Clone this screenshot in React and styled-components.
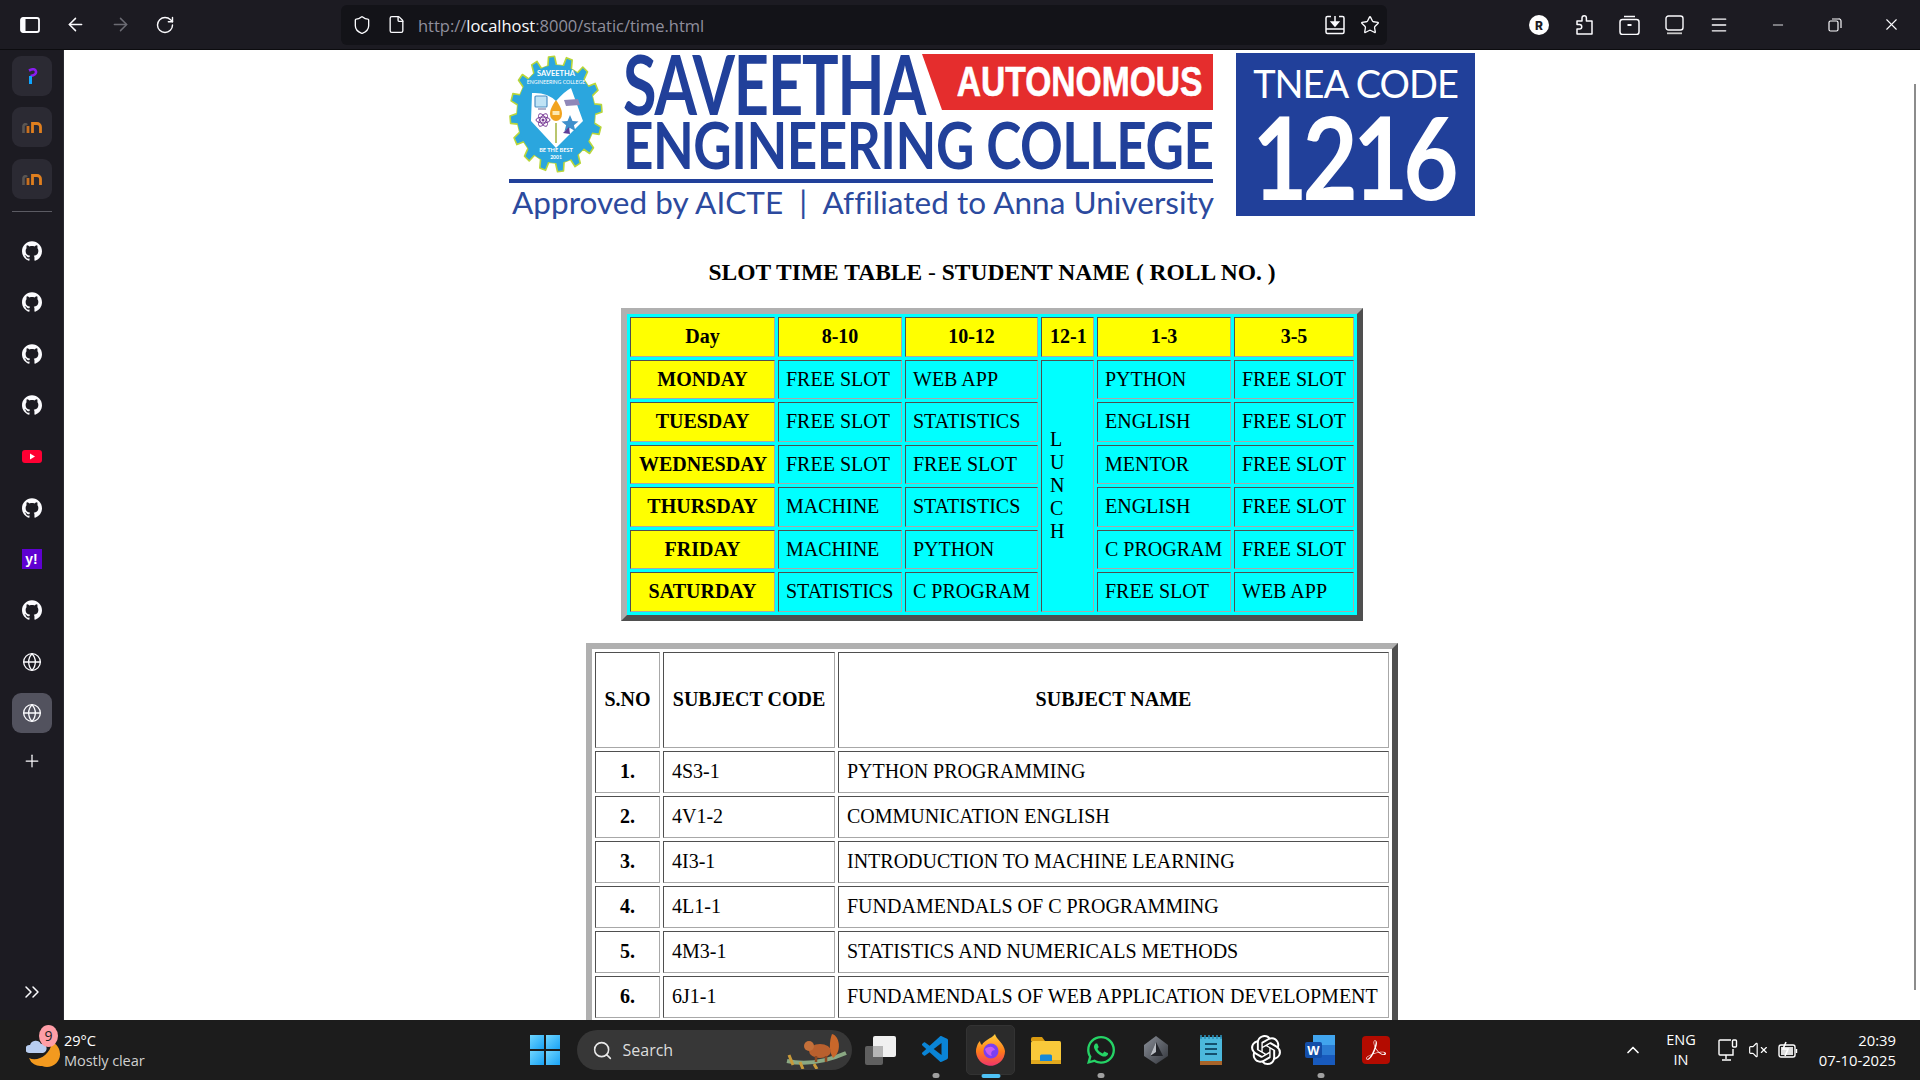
import React from "react";
import styled, { createGlobalStyle } from "styled-components";
import { ArrowLeft, ArrowRight, RotateCw, Shield, File, Star, Menu, Minus, X, Globe, Plus, ChevronsRight, ChevronUp, Search as SearchIcon, VolumeX } from "lucide-react";
import { SiGithub, SiOpenai, SiAdobeacrobatreader } from "react-icons/si";
import { FaWhatsapp } from "react-icons/fa";
import { VscVscode } from "react-icons/vsc";

const Global = createGlobalStyle`
  html, body { margin: 0; padding: 0; height: 100%; overflow: hidden; background: #fff; }
  #root { height: 100%; }
  * { box-sizing: border-box; }
`;

const Screen = styled.div`display:flex;flex-direction:column;height:1080px;width:1920px;overflow:hidden;`;
const Middle = styled.div`display:flex;flex:1;min-height:0;`;

const TopBar = styled.header`display:flex;align-items:center;height:50px;flex:none;background:#1c1b22;border-bottom:1px solid #0c0c0f;padding-left:7.5px;color:#fbfbfe;`;
const ToolSlot = styled.div`width:${p => p.$w || 45}px;height:49px;display:flex;align-items:center;justify-content:center;flex:none;color:${p => p.$dim ? "#6b6b73" : "#fbfbfe"};`;
const UrlBar = styled.div`display:flex;align-items:center;width:1046px;height:40px;margin-left:153.5px;background:#131318;border-radius:6px;padding-left:11px;flex:none;`;
const UrlIcon = styled.span`display:flex;width:${p => p.$w}px;justify-content:center;flex:none;color:#fbfbfe;`;
const UrlText = styled.div`font:400 16.5px "Open Sans",sans-serif;letter-spacing:-.02px;color:#8f8f9d;margin:2px 0 0 -3px;white-space:nowrap;flex:1;`;
const UrlHost = styled.span`color:#fbfbfe;`;
const ToolSet = styled.div`display:flex;margin-left:auto;`;
const WinControls = styled.div`display:flex;margin-left:7.5px;`;

const Sidebar = styled.aside`width:64px;flex:none;background:#1c1b22;display:flex;flex-direction:column;align-items:center;padding-top:6px;gap:11.3px;border-right:1px solid #2a2a30;color:#fbfbfe;`;
const SideItem = styled.div`width:40px;height:${p => p.$h || 40}px;flex:none;display:flex;align-items:center;justify-content:center;border-radius:9px;background:${p => p.$active ? "#52525e" : p.$tile ? "#2b2a33" : "transparent"};`;
const SideRule = styled.div`width:40px;height:1px;background:#5b5b63;margin:1px 0 8px;flex:none;`;
const SideBottom = styled.div`margin-top:auto;margin-bottom:16px;display:flex;`;

const Main = styled.main`flex:1;position:relative;background:#fff;display:flex;flex-direction:column;align-items:center;padding-top:3px;overflow:hidden;min-width:0;`;
const Scrollbar = styled.div`position:absolute;right:4px;top:34px;width:2px;height:906px;background:#8c8c8c;`;

const Logo = styled.div`display:flex;align-items:flex-start;width:966px;height:163px;flex:none;`;
const LogoLeft = styled.div`width:704px;flex:none;display:flex;flex-direction:column;color:#21409a;`;
const LogoTop = styled.div`display:flex;height:125px;`;
const Emblem = styled.svg`width:94px;height:118px;margin-top:2px;flex:none;`;
const Wordmark = styled.div`margin-left:22px;flex:1;display:flex;flex-direction:column;`;
const WordRow = styled.div`display:flex;height:67px;`;
const Saveetha = styled.span`font:700 82px/60px Lato,sans-serif;letter-spacing:-1.4px;display:block;width:297px;margin-left:-2px;margin-right:2px;white-space:nowrap;overflow:visible;transform:scaleX(.745);transform-origin:left center;`;
const Banner = styled.div`width:291px;height:56px;background:#e52d2d;clip-path:polygon(0 0,100% 0,100% 100%,20px 100%);color:#fff;display:flex;align-items:center;justify-content:center;padding-left:24px;margin-top:1px;`;
const BannerText = styled.span`font:700 42px/56px "Liberation Sans",sans-serif;display:block;transform:scaleX(.8);white-space:nowrap;-webkit-text-stroke:.6px #fff;`;
const Engineering = styled.span`font:700 65px/48px Lato,sans-serif;letter-spacing:-.6px;display:block;white-space:nowrap;width:588px;margin-left:-2px;transform:scaleX(.815);transform-origin:left center;`;
const LogoRule = styled.div`height:4px;background:#21409a;margin-top:1px;`;
const Approved = styled.div`font:400 31.5px/38px Lato,sans-serif;letter-spacing:.03px;margin:0 0 0 3px;white-space:nowrap;color:#2c4a9e;`;
const Tnea = styled.div`width:239px;height:163px;margin-left:23px;flex:none;background:#21409a;color:#fff;display:flex;flex-direction:column;align-items:center;`;
const TneaLabel = styled.div`font:400 38px/44px Lato,sans-serif;letter-spacing:-1px;margin-top:8px;white-space:nowrap;`;
const TneaCode = styled.div`font:700 115px/100px Lato,sans-serif;letter-spacing:-6px;margin-top:0;white-space:nowrap;transform:scaleX(.83);padding-right:6px;`;

const Heading = styled.h3`margin:42.5px 0 0;font:700 23.5px/27px "Liberation Serif",serif;color:#000;white-space:nowrap;`;
const HeadDash = styled.span`font-weight:400;`;

const Table = styled.table`
  flex:none;table-layout:fixed;width:${p => p.$w}px;margin-top:${p => p.$mt}px;
  border-collapse:separate;border-spacing:3px;background:${p => p.$bg || "#fff"};
  border:6px solid;border-color:#b0b0b0 #4f4f4f #4f4f4f #b0b0b0;
  font:400 20px/23px "Liberation Serif",serif;color:#000;
`;
const Cell = styled.td`
  height:${p => p.$h}px;padding:0 8px 0 ${p => p.$pad || 8}px;border:1px solid;border-color:#4f4f4f #a8a8a8 #a8a8a8 #4f4f4f;
  background:${p => p.$bg || "transparent"};
  font-weight:${p => p.$bold ? 700 : 400};text-align:${p => p.$center ? "center" : "left"};white-space:nowrap;
`;

const Taskbar = styled.footer`height:60px;flex:none;background:#1c1c1c;display:flex;align-items:center;padding-left:26px;color:#fff;position:relative;`;
const Weather = styled.div`width:504px;flex:none;display:flex;align-items:center;`;
const WeatherIcon = styled.div`width:38px;height:36px;position:relative;flex:none;`;
const Badge = styled.span`position:absolute;left:13px;top:-7px;width:19px;height:22px;border-radius:50%;background:#ff9ea6;color:#222;font:400 14px/22px "Open Sans",sans-serif;text-align:center;`;
const WeatherText = styled.div`font:400 14.6px/20px "Open Sans",sans-serif;color:#fff;letter-spacing:-.1px;white-space:nowrap;`;
const WeatherSub = styled.div`color:#d0d0d0;`;
const WinLogo = styled.div`display:grid;grid-template-columns:14px 14px;grid-template-rows:14px 14px;gap:1.5px;flex:none;width:30px;`;
const WinPane = styled.span`background:linear-gradient(135deg,#6fd6ff,#1aa3f5);`;
const SearchBox = styled.div`width:275px;height:40px;margin-left:16.5px;flex:none;border-radius:20px;background:#373737;display:flex;align-items:center;padding-left:15px;color:#e8e8e8;overflow:hidden;`;
const SearchLabel = styled.span`font:400 16px "Open Sans",sans-serif;margin-left:10px;color:#ddd;`;
const Squirrel = styled.svg`margin-left:auto;margin-right:4px;width:64px;height:38px;flex:none;`;
const Slots = styled.div`display:flex;margin-left:1.5px;flex:none;`;
const Slot = styled.div`width:55px;height:50px;position:relative;display:flex;align-items:center;justify-content:center;margin-top:0;`;
const SlotTile = styled.div`position:absolute;left:3px;right:3px;top:0;bottom:0;background:#2b2b2b;border:1px solid #333;border-radius:5px;`;
const SlotDot = styled.span`position:absolute;left:50%;bottom:-3px;transform:translateX(-50%);width:${p => p.$active ? 19 : 7}px;height:${p => p.$active ? 4 : 5}px;border-radius:3px;background:${p => p.$active ? "#4fc3f7" : "#a0a0a0"};`;
const SlotIcon = styled.div`position:relative;display:flex;color:${p => p.$c || "#fff"};`;
const PdfTile = styled.div`width:28px;height:28px;border-radius:4px;background:#b30b00;color:#fff;display:flex;align-items:center;justify-content:center;`;
const Tray = styled.div`margin-left:auto;padding-right:24px;display:flex;align-items:center;color:#fff;`;
const Lang = styled.div`font:400 14.5px/20px "Open Sans",sans-serif;text-align:center;margin-left:17px;width:42px;`;
const TrayIcons = styled.div`display:flex;align-items:center;gap:10px;margin-left:16px;`;
const Clock = styled.div`font:400 14.8px/20px "Open Sans",sans-serif;text-align:right;margin-left:21px;width:77px;white-space:nowrap;display:flex;flex-direction:column;align-items:flex-end;`;

const PanelIcon = () => (<svg width="20" height="16" viewBox="0 0 20 16"><rect x="1" y="1" width="18" height="14" rx="2" fill="none" stroke="#fbfbfe" strokeWidth="1.8"/><rect x="1" y="1" width="4.5" height="14" rx="1" fill="#fbfbfe"/></svg>);
const SaveIcon = () => (<svg width="20" height="20" viewBox="0 0 20 20" fill="none" stroke="#fbfbfe" strokeWidth="1.5"><path d="M6 1.5H2.5A1.5 1.5 0 0 0 1 3v14a1.5 1.5 0 0 0 1.5 1.5h15A1.5 1.5 0 0 0 19 17V3a1.5 1.5 0 0 0-1.5-1.5H14"/><path d="M1 14h18"/><path d="M10 1v8"/><path d="M6.5 7 10 11l3.500-4z" fill="#fbfbfe"/></svg>);
const RBadge = () => (<svg width="20" height="20" viewBox="0 0 20 20"><circle cx="10" cy="10" r="10" fill="#fff"/><text x="10" y="14.500" textAnchor="middle" fontSize="12" fontWeight="800" fontFamily="Inter,sans-serif" fill="#1c1b22">R</text></svg>);
const PuzzleIcon = () => (<svg width="18" height="21" viewBox="0 0 18 21" fill="none" stroke="#fbfbfe" strokeWidth="1.5" strokeLinejoin="round"><path d="M2 7h5V4a2.200 2.200 0 0 1 4.400 0v3H17v13H2v-5h2.500a2 2 0 0 0 0-4.500H2z"/></svg>);
const BoxIcon = () => (<svg width="21" height="20" viewBox="0 0 21 20" fill="none" stroke="#fbfbfe" strokeWidth="1.5"><path d="M5 1.500h11"/><rect x="1" y="4.500" width="19" height="15" rx="2.500"/><path d="M8.500 10h4" strokeWidth="2"/></svg>);
const BottomPanel = () => (<svg width="19" height="20" viewBox="0 0 19 20" fill="none" stroke="#fbfbfe" strokeWidth="1.4"><rect x="1" y="1" width="17" height="14" rx="2.500"/><path d="M2 18.300h15" stroke="#c8c8c8" strokeWidth="1.800"/></svg>);
const RestoreIcon = () => (<svg width="14" height="14" viewBox="0 0 14 14" fill="none" stroke="#fbfbfe" strokeWidth="1.2"><rect x="1" y="3" width="9" height="10" rx="1.500"/><path d="M4 1h6.500A2 2 0 0 1 13 3v7"/></svg>);

const PerplexityMark = () => (<svg width="12" height="16" viewBox="0 0 12 16"><path d="M3 2.500Q9-.5 10 3.500 10.500 7 4.500 8" fill="none" stroke="#8a1cf0" strokeWidth="2.600"/><path d="M4.500 8v8" stroke="#0ea5ff" strokeWidth="3"/></svg>);
const MoodleMark = () => (<svg width="20" height="12" viewBox="0 0 20 12" fill="none"><path d="M1.500 12V5a2 2 0 0 1 3.500-1" stroke="#5a5653" strokeWidth="2.600"/><path d="M6 12V5" stroke="#c9701e" strokeWidth="2.800"/><path d="M10.500 12V2.500h4.500a3.500 3.500 0 0 1 3.500 3.500V12" stroke="#e07f1e" strokeWidth="2.800"/></svg>);
const YouTubeMark = () => (<svg width="20" height="13" viewBox="0 0 20 13"><rect width="20" height="13" rx="3" fill="#ff0033"/><path d="M8 3.500v6l5-3z" fill="#fff"/></svg>);
const YahooMark = () => (<svg width="20" height="20" viewBox="0 0 20 20"><rect width="20" height="20" fill="#5f01d1"/><text x="9.500" y="15" textAnchor="middle" fontSize="14" fontWeight="900" fontFamily="Liberation Sans,sans-serif" fill="#fff">y!</text></svg>);

const buildGear = () => {
  const teeth = 16, cx = 47, cy = 59, pts = [];
  for (let i = 0; i < teeth; i++) {
    const step = (Math.PI * 2) / teeth;
    const a = i * step - step / 4;
    [[0.98, -0.14], [0.98, 0.14], [0.83, 0.28], [0.83, 0.72]].forEach(([r, f]) => {
      const t = f < 0.2 ? a + f * step * 1.2 : a + f * step;
      pts.push(`${(cx + Math.cos(t) * 47 * r).toFixed(1)},${(cy + Math.sin(t) * 59 * r).toFixed(1)}`);
    });
  }
  return pts.join(" ");
};

const EmblemArt = () => (
  <Emblem viewBox="0 0 94 118">
    <polygon points={buildGear()} fill="#2ba6de" stroke="#b9d63a" strokeWidth="1.6" strokeLinejoin="round"/>
    <ellipse cx="47" cy="59" rx="39" ry="49" fill="#2ba6de"/>
    <path d="M23 38Q38 37 47 46 56 36 62 33L74 66 47 93 22 66Z" fill="#fff"/>
    <rect x="26" y="41" width="12" height="11" rx="1" fill="#bfe3f5" stroke="#4d8fc4" strokeWidth="1.2"/>
    <path d="M29 54h8" stroke="#7e7fa8" strokeWidth="1.2"/>
    <g fill="none" stroke="#7a3e97" strokeWidth="1">
      <ellipse cx="34" cy="65" rx="7" ry="3"/>
      <ellipse cx="34" cy="65" rx="7" ry="3" transform="rotate(60 34 65)"/>
      <ellipse cx="34" cy="65" rx="7" ry="3" transform="rotate(120 34 65)"/>
    </g>
    <circle cx="34" cy="65" r="1.500" fill="#7a3e97"/>
    <path d="M47 68V88" stroke="#a8b84a" strokeWidth="1.600"/>
    <path d="M47 45C42 52 41 56 41 59a6 7 0 0 0 12 0C53 56 52 52 47 45Z" fill="#f2a31e"/>
    <rect x="43.500" y="56" width="7" height="4" fill="#fde9b0"/>
    <path d="M61 60l2.500 6 6 .5-4.600 3.800 1.600 6-5.500-3.300-5.500 3.300 1.600-6-4.600-3.800 6-.5z" fill="#3f90cc"/>
    <path d="M54 78l6-6 1 7z" fill="#5d3e97"/>
    <path d="M55 45l14-1 2 6-14 1z" fill="#8f87b8"/>
    <text x="47" y="21" textAnchor="middle" fontSize="7.500" fontWeight="700" fontFamily="Lato,sans-serif" fill="#fff">SAVEETHA</text>
    <text x="47" y="29" textAnchor="middle" fontSize="5.200" fontFamily="Lato,sans-serif" fill="#fff">ENGINEERING COLLEGE</text>
    <text x="47" y="97" textAnchor="middle" fontSize="5.600" fontWeight="700" fontFamily="Lato,sans-serif" fill="#fff">BE THE BEST</text>
    <text x="47" y="104" textAnchor="middle" fontSize="5" fontWeight="700" fontFamily="Lato,sans-serif" fill="#fff">2001</text>
  </Emblem>
);

const WeatherArt = () => (
  <svg width="38" height="36" viewBox="0 0 38 36">
    <path d="M26 10a13 13 0 0 1-10 24 12 12 0 0 1-13-8c8 4 21-2 23-16Z" fill="#f39a1f"/>
    <path d="M3 21a4 4 0 0 1 1-8 6 6 0 0 1 11-1 4 4 0 0 1 2 9Z" fill="#b8cdf0"/>
  </svg>
);
const SquirrelArt = () => (
  <Squirrel viewBox="0 0 64 38">
    <path d="M3 30Q30 36 62 22" stroke="#8aa883" strokeWidth="4" fill="none"/>
    <path d="M5 24l4 10M16 31l3 7M30 33l3 5" stroke="#c99a3a" strokeWidth="3"/>
    <path d="M48 3c8 2 10 18 1 24-4-6-4-16-1-24Z" fill="#c9672a"/>
    <ellipse cx="36" cy="20" rx="11" ry="7" fill="#b9602e"/>
    <circle cx="25" cy="15" r="5" fill="#c4703a"/>
    <path d="M32 25v6M42 25v6" stroke="#8a4722" strokeWidth="2.500"/>
  </Squirrel>
);
const TaskViewArt = () => (<svg width="31" height="29" viewBox="0 0 31 29"><rect x="0" y="10" width="18" height="19" rx="2" fill="#5f5f5f"/><rect x="8" y="0" width="23" height="21" rx="2" fill="#f0f0f0"/><rect x="8" y="10" width="10" height="11" fill="#b5b5b5"/></svg>);
const FirefoxArt = () => (<svg width="30" height="32" viewBox="0 0 30 32"><defs><linearGradient id="ff" x1="0" y1="0" x2="0" y2="1"><stop offset="0" stopColor="#ffd13d"/><stop offset=".55" stopColor="#ff7a1a"/><stop offset="1" stopColor="#f0346b"/></linearGradient></defs><path d="M19 0c1 5 9 9 10 17a14.500 14.500 0 1 1-28-5c1-3 2-4 3-5 0 2 1 3 2 4 2-5 9-6 13-11Z" fill="url(#ff)"/><circle cx="15" cy="17" r="7.500" fill="#7b3ff2"/><path d="M9 15c5-4 9-2 10 1-3 0-5 3-3 6-3 0-6-3-7-7Z" fill="#c65cf0"/></svg>);
const FolderArt = () => (<svg width="30" height="28" viewBox="0 0 30 28"><path d="M0 3a2 2 0 0 1 2-2h9l3 4H0Z" fill="#d99a10"/><rect y="5" width="30" height="23" rx="1.500" fill="#f9c93a"/><rect y="24" width="30" height="4" fill="#e0a81e"/><path d="M9 20a1.500 1.500 0 0 1 1.500-1.500h9A1.500 1.500 0 0 1 21 20v5H9Z" fill="#1689d8"/></svg>);
const HexArt = () => (<svg width="28" height="28" viewBox="0 0 28 28"><defs><linearGradient id="hx" x1="0" y1="0" x2="1" y2="1"><stop offset="0" stopColor="#8a8f98"/><stop offset="1" stopColor="#33363c"/></linearGradient></defs><path d="M14 0 26 9v11L14 28 2 20V9Z" fill="url(#hx)"/><path d="M14 6 21 20H8Z" fill="#23252a"/><path d="M14 6 8 20l6-4Z" fill="#b8bcc2"/></svg>);
const NotepadArt = () => (<svg width="22" height="30" viewBox="0 0 22 30"><rect y="2" width="22" height="28" rx="1" fill="#4cb8dc"/><rect y="26" width="22" height="4" fill="#a8642a"/><path d="M1 0v4M5 0v4M9 0v4M13 0v4M17 0v4M21 0v4" stroke="#2b8fb8" strokeWidth="1.600"/><path d="M5 9h12M5 14h12M5 19h12" stroke="#14506e" strokeWidth="2"/></svg>);
const WordArt = () => (<svg width="32" height="30" viewBox="0 0 32 30"><rect x="8" width="22" height="30" rx="2" fill="#2b7cd3"/><rect x="8" width="22" height="10" fill="#41a5ee"/><rect x="8" y="20" width="22" height="10" fill="#185abd"/><rect y="7" width="17" height="16" rx="2" fill="#144ea8"/><text x="8.500" y="19.500" textAnchor="middle" fontSize="13" fontWeight="700" fontFamily="Liberation Sans,sans-serif" fill="#fff">W</text></svg>);
const MonitorArt = () => (<svg width="20" height="22" viewBox="0 0 20 22" fill="none" stroke="#fff" strokeWidth="1.400"><path d="M13 1H2a1 1 0 0 0-1 1v13a1 1 0 0 0 1 1h13v-6"/><path d="M8 16v4M4 21h9"/><rect x="14.500" y="1" width="4" height="7" rx="1"/></svg>);
const BatteryArt = () => (<svg width="20" height="18" viewBox="0 0 20 18" fill="none" stroke="#fff" strokeWidth="1.400"><rect x="1" y="4" width="16" height="12" rx="2"/><path d="M18.500 8v4"/><path d="M8 1 5 8h5l-3 7" strokeWidth="1.600"/><rect x="3" y="6" width="12" height="8" fill="#fff" stroke="none" opacity=".85"/></svg>);

const DAYS = [
  ["MONDAY", "FREE SLOT", "WEB APP", "PYTHON", "FREE SLOT"],
  ["TUESDAY", "FREE SLOT", "STATISTICS", "ENGLISH", "FREE SLOT"],
  ["WEDNESDAY", "FREE SLOT", "FREE SLOT", "MENTOR", "FREE SLOT"],
  ["THURSDAY", "MACHINE", "STATISTICS", "ENGLISH", "FREE SLOT"],
  ["FRIDAY", "MACHINE", "PYTHON", "C PROGRAM", "FREE SLOT"],
  ["SATURDAY", "STATISTICS", "C PROGRAM", "FREE SLOT", "WEB APP"],
];
const SUBJECTS = [
  ["1.", "4S3-1", "PYTHON PROGRAMMING"],
  ["2.", "4V1-2", "COMMUNICATION ENGLISH"],
  ["3.", "4I3-1", "INTRODUCTION TO MACHINE LEARNING"],
  ["4.", "4L1-1", "FUNDAMENDALS OF C PROGRAMMING"],
  ["5.", "4M3-1", "STATISTICS AND NUMERICALS METHODS"],
  ["6.", "6J1-1", "FUNDAMENDALS OF WEB APPLICATION DEVELOPMENT"],
];
const HEAD = ["Day", "8-10", "10-12", "12-1", "1-3", "3-5"];
const WIDTHS1 = [145, 124, 133, 53, 134, 120];
const WIDTHS2 = [65, 172, 551];

const Y = "#ffff00", C = "#00ffff";

export default function App() {
  return (
    <>
      <Global />
      <Screen>
        <TopBar>
          <ToolSlot><PanelIcon /></ToolSlot>
          <ToolSlot><ArrowLeft size={21} strokeWidth={1.7} /></ToolSlot>
          <ToolSlot $dim><ArrowRight size={21} strokeWidth={1.7} /></ToolSlot>
          <ToolSlot><RotateCw size={20} strokeWidth={1.7} /></ToolSlot>
          <UrlBar>
            <UrlIcon $w={20}><Shield size={20} strokeWidth={1.6} /></UrlIcon>
            <UrlIcon $w={49}><File size={19} strokeWidth={1.7} /></UrlIcon>
            <UrlText>http://<UrlHost>localhost</UrlHost>:8000/static/time.html</UrlText>
            <UrlIcon $w={35}><SaveIcon /></UrlIcon>
            <UrlIcon $w={35}><Star size={20} strokeWidth={1.6} /></UrlIcon>
          </UrlBar>
          <ToolSet>
            <ToolSlot><RBadge /></ToolSlot>
            <ToolSlot><PuzzleIcon /></ToolSlot>
            <ToolSlot><BoxIcon /></ToolSlot>
            <ToolSlot><BottomPanel /></ToolSlot>
            <ToolSlot><Menu size={20} strokeWidth={1.6} /></ToolSlot>
          </ToolSet>
          <WinControls>
            <ToolSlot $w={57}><Minus size={16} strokeWidth={1.3} /></ToolSlot>
            <ToolSlot $w={57}><RestoreIcon /></ToolSlot>
            <ToolSlot $w={57}><X size={19} strokeWidth={1.4} /></ToolSlot>
          </WinControls>
        </TopBar>
        <Middle>
          <Sidebar>
            <SideItem $tile><PerplexityMark /></SideItem>
            <SideItem $tile><MoodleMark /></SideItem>
            <SideItem $tile><MoodleMark /></SideItem>
            <SideRule />
            <SideItem><SiGithub size={20} /></SideItem>
            <SideItem><SiGithub size={20} /></SideItem>
            <SideItem><SiGithub size={20} /></SideItem>
            <SideItem><SiGithub size={20} /></SideItem>
            <SideItem><YouTubeMark /></SideItem>
            <SideItem><SiGithub size={20} /></SideItem>
            <SideItem><YahooMark /></SideItem>
            <SideItem><SiGithub size={20} /></SideItem>
            <SideItem><Globe size={20} strokeWidth={1.6} /></SideItem>
            <SideItem $active><Globe size={20} strokeWidth={1.6} /></SideItem>
            <SideItem $h={34}><Plus size={20} strokeWidth={1.5} /></SideItem>
            <SideBottom><ChevronsRight size={24} strokeWidth={1.5} /></SideBottom>
          </Sidebar>
          <Main>
            <Scrollbar />
            <Logo>
              <LogoLeft>
                <LogoTop>
                  <EmblemArt />
                  <Wordmark>
                    <WordRow>
                      <Saveetha>SAVEETHA</Saveetha>
                      <Banner><BannerText>AUTONOMOUS</BannerText></Banner>
                    </WordRow>
                    <Engineering>ENGINEERING COLLEGE</Engineering>
                  </Wordmark>
                </LogoTop>
                <LogoRule />
                <Approved>Approved by AICTE&nbsp; | &nbsp;Affiliated to Anna University</Approved>
              </LogoLeft>
              <Tnea>
                <TneaLabel>TNEA CODE</TneaLabel>
                <TneaCode>1216</TneaCode>
              </Tnea>
            </Logo>
            <Heading>SLOT TIME TABLE <HeadDash>-</HeadDash> STUDENT NAME ( ROLL NO. )</Heading>
            <Table $w={742} $mt={22} $bg={C}>
              <colgroup>{WIDTHS1.map((w, i) => <col key={i} style={{ width: w }} />)}</colgroup>
              <tbody>
                <tr>{HEAD.map(h => <Cell as="th" key={h} $h={40} $bg={Y} $bold $center>{h}</Cell>)}</tr>
                {DAYS.map((d, i) => (
                  <tr key={d[0]}>
                    <Cell $h={39.5} $bg={Y} $bold $center>{d[0]}</Cell>
                    <Cell $h={39.5} $pad={7}>{d[1]}</Cell>
                    <Cell $h={39.5} $pad={7}>{d[2]}</Cell>
                    {i === 0 && <Cell rowSpan={6}>L<br />U<br />N<br />C<br />H</Cell>}
                    <Cell $h={39.5} $pad={7}>{d[3]}</Cell>
                    <Cell $h={39.5} $pad={7}>{d[4]}</Cell>
                  </tr>
                ))}
              </tbody>
            </Table>
            <Table $w={812} $mt={22}>
              <colgroup>{WIDTHS2.map((w, i) => <col key={i} style={{ width: w }} />)}</colgroup>
              <tbody>
                <tr>
                  <Cell as="th" $h={96} $bold $center>S.NO</Cell>
                  <Cell as="th" $h={96} $bold $center>SUBJECT CODE</Cell>
                  <Cell as="th" $h={96} $bold $center>SUBJECT NAME</Cell>
                </tr>
                {SUBJECTS.map(s => (
                  <tr key={s[0]}>
                    <Cell $h={42} $bold $center>{s[0]}</Cell>
                    <Cell $h={42}>{s[1]}</Cell>
                    <Cell $h={42}>{s[2]}</Cell>
                  </tr>
                ))}
              </tbody>
            </Table>
          </Main>
        </Middle>
        <Taskbar>
          <Weather>
            <WeatherIcon><WeatherArt /><Badge>9</Badge></WeatherIcon>
            <WeatherText>29°C<WeatherSub>Mostly clear</WeatherSub></WeatherText>
          </Weather>
          <WinLogo><WinPane /><WinPane /><WinPane /><WinPane /></WinLogo>
          <SearchBox>
            <SearchIcon size={21} strokeWidth={1.8} />
            <SearchLabel>Search</SearchLabel>
            <SquirrelArt />
          </SearchBox>
          <Slots>
            <Slot><SlotIcon><TaskViewArt /></SlotIcon></Slot>
            <Slot><SlotIcon $c="#0a84d6"><VscVscode size={32} /></SlotIcon><SlotDot /></Slot>
            <Slot><SlotTile /><SlotIcon><FirefoxArt /></SlotIcon><SlotDot $active /></Slot>
            <Slot><SlotIcon><FolderArt /></SlotIcon></Slot>
            <Slot><SlotIcon $c="#25d366"><FaWhatsapp size={32} /></SlotIcon><SlotDot /></Slot>
            <Slot><SlotIcon><HexArt /></SlotIcon></Slot>
            <Slot><SlotIcon><NotepadArt /></SlotIcon></Slot>
            <Slot><SlotIcon><SiOpenai size={30} /></SlotIcon></Slot>
            <Slot><SlotIcon><WordArt /></SlotIcon><SlotDot /></Slot>
            <Slot><PdfTile><SiAdobeacrobatreader size={20} /></PdfTile></Slot>
          </Slots>
          <Tray>
            <ChevronUp size={20} strokeWidth={2} />
            <Lang>ENG<br />IN</Lang>
            <TrayIcons>
              <MonitorArt />
              <VolumeX size={20} strokeWidth={1.4} />
              <BatteryArt />
            </TrayIcons>
            <Clock><span>20:39</span><span>07-10-2025</span></Clock>
          </Tray>
        </Taskbar>
      </Screen>
    </>
  );
}
